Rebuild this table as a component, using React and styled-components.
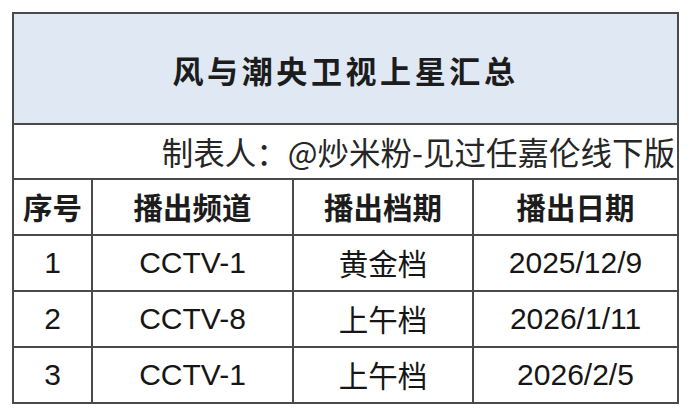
import React from "react";
import styled, { createGlobalStyle } from "styled-components";

const Global = createGlobalStyle`
  html, body { margin: 0; padding: 0; background: #ffffff; }
  body { padding: 12px 0 0 12px; font-family: "Liberation Sans", "Noto Sans CJK SC", sans-serif; color: #1c1c1c; }
`;

const Table = styled.table`
  border-collapse: collapse;
  table-layout: fixed;
  width: 665px;
  border: 2px solid #4a4a4a;
`;

const Cell = styled.td`
  border: 2px solid #4a4a4a;
  padding: 0;
  text-align: ${(p) => p.$align || "center"};
  vertical-align: middle;
  height: ${(p) => p.$h || 54}px;
  font-size: 30px;
  line-height: 1;
  white-space: nowrap;
  overflow: hidden;
`;

const TitleCell = styled(Cell)`
  background: #dfe8f3;
  font-family: "Noto Sans CJK SC", sans-serif;
  font-weight: 700;
  font-size: 31px;
  letter-spacing: 3.6px;
  padding-top: 2px;
`;

const CreditCell = styled(Cell)`
  font-family: "Noto Sans CJK SC", sans-serif;
  font-size: 31.5px;
  color: #262626;
  padding-right: 2px;
`;

const HeadCell = styled(Cell)`
  font-family: "Noto Sans CJK SC", sans-serif;
  font-weight: 700;
  font-size: 29.5px;
`;

const rows = [
  ["1", "CCTV-1", "黄金档", "2025/12/9"],
  ["2", "CCTV-8", "上午档", "2026/1/11"],
  ["3", "CCTV-1", "上午档", "2026/2/5"],
];

const BodyCell = styled(Cell)`
  font-family: "Liberation Sans", "Noto Sans CJK SC", sans-serif;
  font-size: 30px;
  color: #161616;
`;

const CjkCell = styled(BodyCell)`
  font-family: "Noto Sans CJK SC", sans-serif;
  font-size: 29.5px;
`;

export default function App() {
  return (
    <>
      <Global />
      <Table>
        <colgroup>
          <col style={{ width: 79 }} />
          <col style={{ width: 201 }} />
          <col style={{ width: 180 }} />
          <col style={{ width: 205 }} />
        </colgroup>
        <tbody>
          <tr>
            <TitleCell colSpan={4} $h={107}>风与潮央卫视上星汇总</TitleCell>
          </tr>
          <tr>
            <CreditCell colSpan={4} $align="right" $h={53}>
              制表人：@炒米粉-见过任嘉伦线下版
            </CreditCell>
          </tr>
          <tr>
            <HeadCell>序号</HeadCell>
            <HeadCell>播出频道</HeadCell>
            <HeadCell>播出档期</HeadCell>
            <HeadCell>播出日期</HeadCell>
          </tr>
          {rows.map((r) => (
            <tr key={r[0]}>
              <BodyCell>{r[0]}</BodyCell>
              <BodyCell>{r[1]}</BodyCell>
              <CjkCell>{r[2]}</CjkCell>
              <BodyCell>{r[3]}</BodyCell>
            </tr>
          ))}
        </tbody>
      </Table>
    </>
  );
}
